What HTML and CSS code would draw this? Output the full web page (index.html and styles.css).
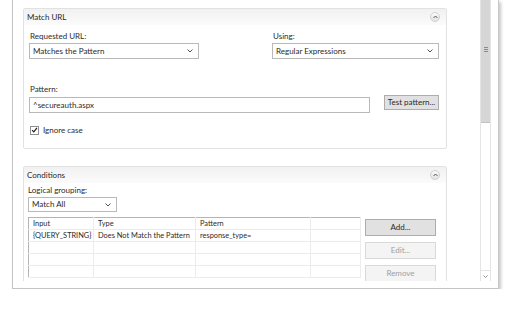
FILE: index.html
```html
<!DOCTYPE html>
<html lang="en">
<head>
    <meta charset="UTF-8">
    <title>Edit Inbound Rule</title>
    <link rel="stylesheet" href="styles.css">
</head>
<body>
    <div class="window">
        <div class="viewport">
            <div class="content">
                <div class="group match-url">
                    <div class="group-head">
                        <span>Match URL</span>
                        <span class="collapse"><svg width="5" height="4" viewBox="0 0 5 4"><path d="M0.5 3L2.5 1L4.5 3" fill="none" stroke="#555" stroke-width="1"/></svg></span>
                    </div>
                    <div class="row two-col">
                        <div class="field left">
                            <label>Requested URL:</label>
                            <div class="select">Matches the Pattern<svg class="arrow" width="6" height="4" viewBox="0 0 6 4"><path d="M0.5 0.5L3 3L5.5 0.5" fill="none" stroke="#555" stroke-width="1"/></svg></div>
                        </div>
                        <div class="field right">
                            <label>Using:</label>
                            <div class="select">Regular Expressions<svg class="arrow" width="6" height="4" viewBox="0 0 6 4"><path d="M0.5 0.5L3 3L5.5 0.5" fill="none" stroke="#555" stroke-width="1"/></svg></div>
                        </div>
                    </div>
                    <div class="pattern">
                        <label>Pattern:</label>
                        <div class="pattern-row">
                            <div class="input">^secureauth.aspx</div>
                            <div class="btn test">Test pattern...</div>
                        </div>
                    </div>
                    <div class="check">
                        <span class="box"><svg width="8" height="8" viewBox="0 0 8 8"><path d="M1.3 4.2L3.2 6.2L6.8 1.6" fill="none" stroke="#222" stroke-width="1.4"/></svg></span>
                        <span>Ignore case</span>
                    </div>
                </div>

                <div class="group conditions">
                    <div class="group-head">
                        <span>Conditions</span>
                        <span class="collapse"><svg width="5" height="4" viewBox="0 0 5 4"><path d="M0.5 3L2.5 1L4.5 3" fill="none" stroke="#555" stroke-width="1"/></svg></span>
                    </div>
                    <label class="grouping">Logical grouping:</label>
                    <div class="select small">Match All<svg class="arrow" width="6" height="4" viewBox="0 0 6 4"><path d="M0.5 0.5L3 3L5.5 0.5" fill="none" stroke="#555" stroke-width="1"/></svg></div>
                    <div class="cond-row">
                        <table class="grid">
                            <thead>
                                <tr><th class="c1">Input</th><th class="c2">Type</th><th class="c3">Pattern</th><th class="c4"></th></tr>
                            </thead>
                            <tbody>
                                <tr><td>{QUERY_STRING}</td><td>Does Not Match the Pattern</td><td>response_type=</td><td></td></tr>
                                <tr><td></td><td></td><td></td><td></td></tr>
                                <tr><td></td><td></td><td></td><td></td></tr>
                                <tr><td></td><td></td><td></td><td></td></tr>
                            </tbody>
                        </table>
                        <div class="side-buttons">
                            <div class="btn">Add...</div>
                            <div class="btn disabled">Edit...</div>
                            <div class="btn disabled">Remove</div>
                        </div>
                    </div>
                </div>
            </div>
            <div class="scrollbar">
                <div class="thumb"><span class="grip"></span></div>
                <div class="track"></div>
                <div class="down"><svg width="5" height="3" viewBox="0 0 5 3"><path d="M0.5 0.5L2.5 2.5L4.5 0.5" fill="none" stroke="#888" stroke-width="0.9"/></svg></div>
            </div>
        </div>
    </div>
</body>
</html>
```

FILE: styles.css
```css
body {
    margin: 0;
    background-color: white;
    font-family: 'Lato', 'Open Sans', sans-serif;
    font-size: 8px;
    color: #2a2a2a;
}
.window {
    margin-left: 12px;
    width: 478px;
    height: 281px;
    padding: 0 7px 7px 0;
    border-left: 1px solid #c4c4c4;
    border-right: 1px solid #c8c8c8;
    border-bottom: 1px solid #c4c4c4;
    background-color: white;
    box-shadow: 2px 2px 3px rgba(0,0,0,0.22);
}
.viewport {
    display: flex;
    height: 281px;
    overflow: hidden;
}
.content {
    flex: 1;
    padding: 8px 0 0 10px;
}
.group {
    width: 422px;
    border: 1px solid #e2e2e2;
    border-radius: 2px;
    background-color: white;
}
.group-head {
    display: flex;
    justify-content: space-between;
    align-items: center;
    height: 16px;
    padding: 0 6px 0 3px;
    background: linear-gradient(#f1f1f1, #fbfbfb);
}
.collapse {
    display: flex;
    align-items: center;
    justify-content: center;
    width: 8px;
    height: 8px;
    border-radius: 50%;
    border: 1px solid #d0d0d0;
    background: linear-gradient(#fafafa, #e2e2e2);
}
label {
    display: block;
}
.match-url {
    height: 139px;
}
.two-col {
    display: flex;
    justify-content: space-between;
    padding: 6px 7px 0 5px;
}
.field label {
    line-height: 11px;
    margin-bottom: 1px;
    padding-left: 1px;
}
.field.left .select {
    width: 165px;
}
.field.right .select {
    width: 162px;
}
.select {
    position: relative;
    height: 14px;
    line-height: 14px;
    padding-left: 3px;
    border: 1px solid #b9b9b9;
    background-color: white;
}
.select .arrow {
    position: absolute;
    right: 5px;
    top: 5px;
}
.pattern {
    padding: 25px 7px 0 5px;
}
.pattern label {
    line-height: 11px;
    margin-bottom: 2px;
    padding-left: 1px;
}
.pattern-row {
    display: flex;
    align-items: flex-start;
    justify-content: space-between;
}
.input {
    width: 336px;
    height: 14px;
    line-height: 14px;
    padding-left: 3px;
    border: 1px solid #b9b9b9;
}
.btn {
    height: 13px;
    line-height: 13px;
    text-align: center;
    border: 1px solid #adadad;
    background-color: #e1e1e1;
}
.btn.test {
    width: 53px;
    margin-top: -2px;
}
.check {
    display: flex;
    align-items: center;
    gap: 4px;
    padding: 12px 0 0 6px;
}
.box {
    display: flex;
    align-items: center;
    justify-content: center;
    width: 7px;
    height: 7px;
    border: 1px solid #8f8f8f;
    background-color: white;
}
.conditions {
    margin-top: 17px;
    height: 140px;
}
.grouping {
    padding: 2px 0 0 4px;
    line-height: 11px;
}
.select.small {
    width: 84px;
    height: 13px;
    line-height: 13px;
    margin-left: 4px;
    margin-top: 1px;
}
.cond-row {
    display: flex;
    align-items: flex-start;
    padding: 5px 0 0 4px;
}
.grid {
    width: 333px;
    border-collapse: collapse;
    border: 1px solid #b4b4b4;
    border-bottom: none;
    table-layout: fixed;
    font-size: 7.4px;
}
.grid th, .grid td {
    height: 11px;
    padding: 0 0 0 4px;
    border-right: 1px solid #ececec;
    border-bottom: 1px solid #ececec;
    font-weight: normal;
    text-align: left;
    white-space: nowrap;
    line-height: 11px;
}
.grid th.c1 { width: 60px; }
.grid th.c2 { width: 97px; }
.grid th.c3 { width: 110px; }
.side-buttons {
    display: flex;
    flex-direction: column;
    gap: 6px;
    margin-left: 4px;
    margin-top: 2px;
    width: 71px;
}
.side-buttons .btn {
    height: 15px;
    line-height: 15px;
}
.btn.disabled {
    background-color: #f4f4f4;
    border-color: #d9d9d9;
    color: #a0a0a0;
}
.scrollbar {
    display: flex;
    flex-direction: column;
    width: 11px;
    border-left: 1px solid #e4e4e4;
    border-right: 1px solid #e4e4e4;
    box-sizing: border-box;
}
.thumb {
    height: 123px;
    display: flex;
    align-items: flex-start;
    justify-content: center;
    background-color: #d6d6d6;
    border-bottom: 1px solid #c2c2c2;
    box-sizing: border-box;
}
.grip {
    width: 4px;
    height: 5px;
    margin-top: 47px;
    background: repeating-linear-gradient(#8a8a8a 0 1px, transparent 1px 2px);
}
.track {
    flex: 1;
}
.down {
    display: flex;
    align-items: center;
    justify-content: center;
    height: 10px;
    border-top: 1px solid #e4e4e4;
}
```
